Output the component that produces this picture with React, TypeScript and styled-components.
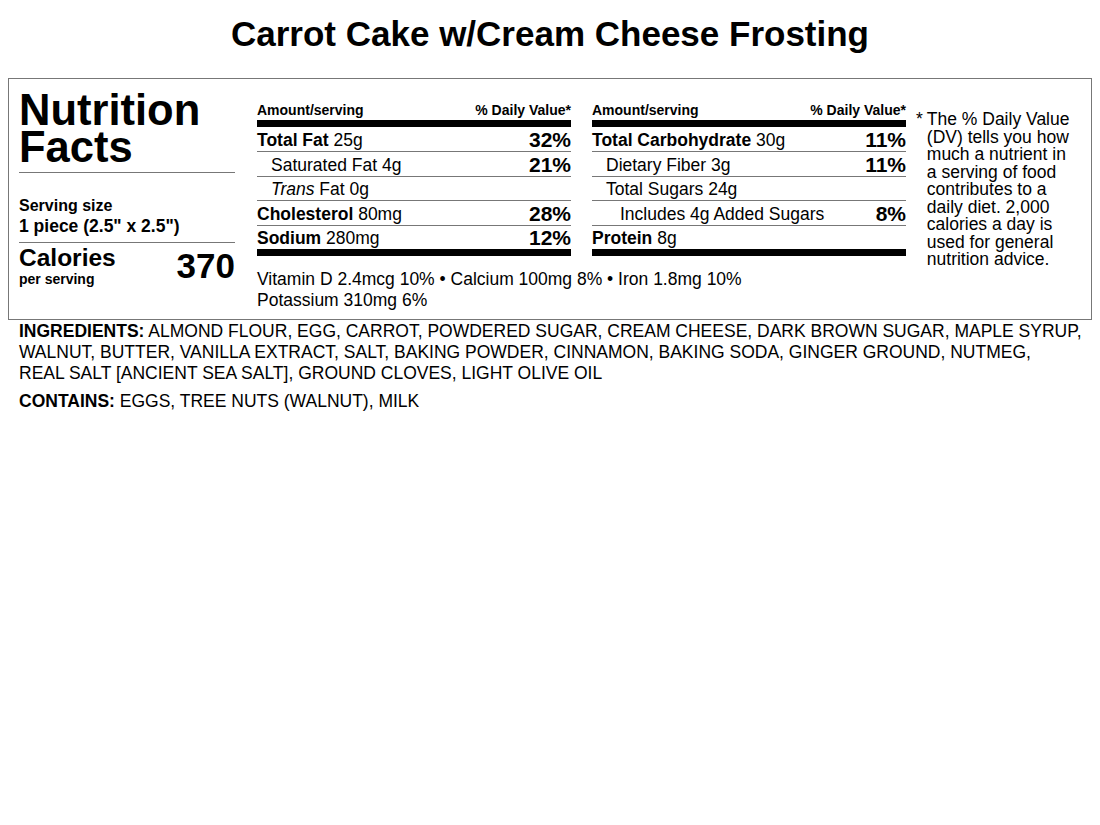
import React from "react";
import styled, { createGlobalStyle } from "styled-components";

const Global = createGlobalStyle`
  body {
    margin: 8px;
    font-family: "Liberation Sans", Arial, sans-serif;
    color: #000;
    background: #fff;
  }
`;

const Title = styled.h1`
  margin: 6px 0 24px;
  text-align: center;
  font-size: 35px;
  line-height: 40px;
  font-weight: 700;
`;

const Label = styled.section`
  display: flex;
  border: 1px solid #777;
  padding: 10px 10px 8px;
  gap: 22px;
`;

const LeftCol = styled.div`
  width: 216px;
  flex: none;
  display: flex;
  flex-direction: column;
`;

const Heading = styled.div`
  font-size: 43.5px;
  line-height: 37px;
  font-weight: 700;
  padding: 3px 0 6px;
  border-bottom: 1px solid #777;
`;

const Serving = styled.div`
  padding: 23px 0 6px;
  border-bottom: 1px solid #777;
  font-weight: 700;
`;

const ServingLabel = styled.div`
  font-size: 16px;
  line-height: 20px;
`;

const ServingValue = styled.div`
  font-size: 17.5px;
  line-height: 20px;
`;

const CalRow = styled.div`
  display: flex;
  justify-content: space-between;
  align-items: flex-start;
  font-weight: 700;
  padding-top: 1px;
`;

const CalLabel = styled.div`
  font-size: 24.5px;
  line-height: 27px;
`;

const PerServing = styled.div`
  font-size: 14px;
  line-height: 16px;
`;

const CalValue = styled.div`
  font-size: 35px;
  line-height: 38px;
  padding-top: 3px;
`;

const Middle = styled.div`
  width: 649px;
  flex: none;
  display: flex;
  flex-direction: column;
`;

const Tables = styled.div`
  display: grid;
  grid-template-columns: 1fr 1fr;
  column-gap: 21px;
`;

const Table = styled.div`
  display: flex;
  flex-direction: column;
  padding-top: 13px;
`;

const TableHead = styled.div`
  display: flex;
  justify-content: space-between;
  font-size: 14px;
  line-height: 16px;
  font-weight: 700;
  border-bottom: 7px solid #000;
  padding-bottom: 2px;
`;

const Row = styled.div<{ $indent?: number; $last?: boolean }>`
  display: flex;
  justify-content: space-between;
  align-items: flex-end;
  height: ${(p) => (p.$last ? 23 : 23.5)}px;
  padding-left: ${(p) => (p.$indent || 0) * 14}px;
  font-size: 17.5px;
  line-height: 22px;
  border-bottom: ${(p) => (p.$last ? "7px solid #000" : "1px solid #777")};

  &:nth-child(2) {
    height: 24px;
  }
`;

const Pct = styled.span`
  font-weight: 700;
  font-size: 21px;
  line-height: 22px;
`;

const Vitamins = styled.div`
  margin-top: 13px;
  font-size: 17.5px;
  line-height: 21px;
`;

const Footnote = styled.div`
  flex: 1;
  display: flex;
  gap: 4px;
  margin-left: -12px;
  padding-top: 22px;
  font-size: 17.5px;
  line-height: 17.5px;
`;

const Star = styled.span`
  flex: none;
`;

const FootText = styled.span`
  width: 146px;
`;

const Below = styled.div`
  padding: 1px 11px 0;
  font-size: 17.5px;
  line-height: 21px;
`;

const Para = styled.p`
  margin: 0 0 7px;
`;

const Line = styled.span`
  display: block;
  white-space: nowrap;
`;

type R = { name: React.ReactNode; amt: string; pct?: string; indent?: number; last?: boolean };

const left: R[] = [
  { name: <b>Total Fat</b>, amt: "25g", pct: "32%" },
  { name: "Saturated Fat", amt: "4g", pct: "21%", indent: 1 },
  { name: <><i>Trans</i> Fat</>, amt: "0g", indent: 1 },
  { name: <b>Cholesterol</b>, amt: "80mg", pct: "28%" },
  { name: <b>Sodium</b>, amt: "280mg", pct: "12%", last: true },
];

const right: R[] = [
  { name: <b>Total Carbohydrate</b>, amt: "30g", pct: "11%" },
  { name: "Dietary Fiber", amt: "3g", pct: "11%", indent: 1 },
  { name: "Total Sugars", amt: "24g", indent: 1 },
  { name: "Includes 4g Added Sugars", amt: "", pct: "8%", indent: 2 },
  { name: <b>Protein</b>, amt: "8g", last: true },
];

const NutTable = ({ rows }: { rows: R[] }) => (
  <Table>
    <TableHead>
      <span>Amount/serving</span>
      <span>% Daily Value*</span>
    </TableHead>
    {rows.map((r, i) => (
      <Row key={i} $indent={r.indent} $last={r.last}>
        <span>
          {r.name}
          {r.amt ? <> {r.amt}</> : null}
        </span>
        {r.pct ? <Pct>{r.pct}</Pct> : null}
      </Row>
    ))}
  </Table>
);

export default function App() {
  return (
    <>
      <Global />
      <Title>Carrot Cake w/Cream Cheese Frosting</Title>
      <Label>
        <LeftCol>
          <Heading>
            Nutrition
            <br />
            Facts
          </Heading>
          <Serving>
            <ServingLabel>Serving size</ServingLabel>
            <ServingValue>1 piece (2.5" x 2.5")</ServingValue>
          </Serving>
          <CalRow>
            <div>
              <CalLabel>Calories</CalLabel>
              <PerServing>per serving</PerServing>
            </div>
            <CalValue>370</CalValue>
          </CalRow>
        </LeftCol>
        <Middle>
          <Tables>
            <NutTable rows={left} />
            <NutTable rows={right} />
          </Tables>
          <Vitamins>
            Vitamin D 2.4mcg 10% • Calcium 100mg 8% • Iron 1.8mg 10%
            <br />
            Potassium 310mg 6%
          </Vitamins>
        </Middle>
        <Footnote>
          <Star>*</Star>
          <FootText>
            The % Daily Value (DV) tells you how much a nutrient in a serving of food contributes to a daily
            diet. 2,000 calories a day is used for general nutrition advice.
          </FootText>
        </Footnote>
      </Label>
      <Below>
        <Para>
          <Line>
            <b>INGREDIENTS:</b> ALMOND FLOUR, EGG, CARROT, POWDERED SUGAR, CREAM CHEESE, DARK BROWN SUGAR,
            MAPLE SYRUP,
          </Line>
          <Line>
            WALNUT, BUTTER, VANILLA EXTRACT, SALT, BAKING POWDER, CINNAMON, BAKING SODA, GINGER GROUND, NUTMEG,
          </Line>
          <Line>REAL SALT [ANCIENT SEA SALT], GROUND CLOVES, LIGHT OLIVE OIL</Line>
        </Para>
        <Para>
          <b>CONTAINS:</b> EGGS, TREE NUTS (WALNUT), MILK
        </Para>
      </Below>
    </>
  );
}
